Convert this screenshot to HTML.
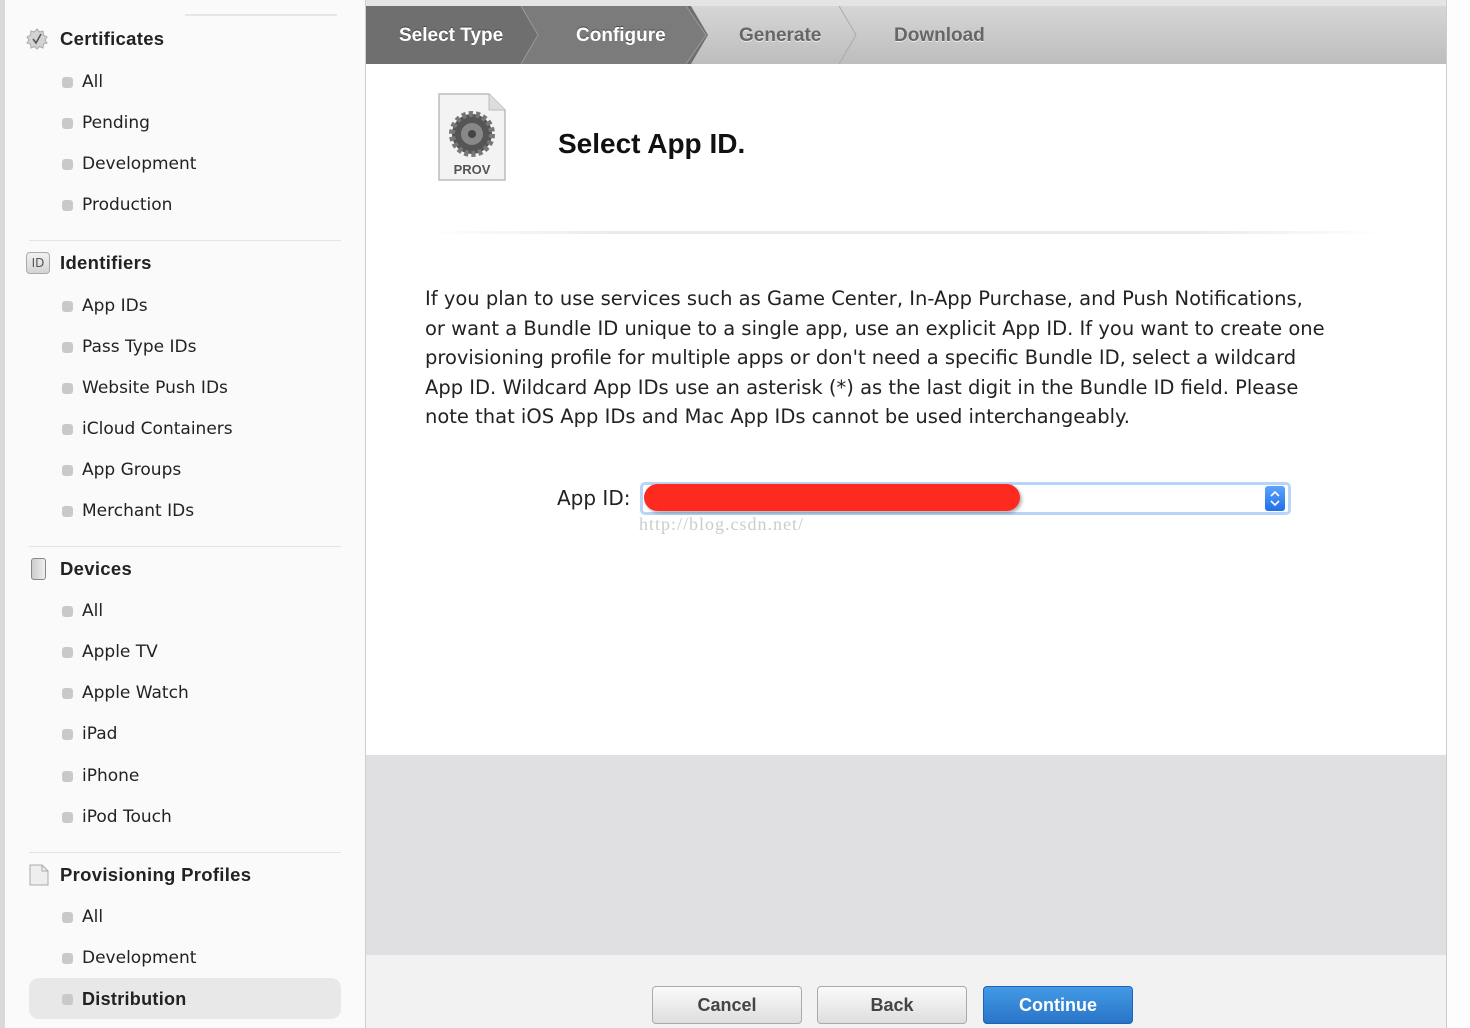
<!DOCTYPE html>
<html><head><meta charset="utf-8"><style>
*{margin:0;padding:0;box-sizing:border-box}
body{width:1470px;height:1028px;overflow:hidden;background:#fff;font-family:"DejaVu Sans","Liberation Sans",sans-serif;position:relative}
.side{position:absolute;left:0;top:0;width:366px;height:1028px;background:#fafafa;border-right:1px solid #cfcfcf}
.abs{position:absolute}
.h{position:absolute;left:60px;font-size:18.5px;font-weight:bold;color:#222;font-family:"Liberation Sans",sans-serif;letter-spacing:0.3px}
.i{position:absolute;left:82px;font-size:17px;color:#222;margin-top:2px}
.i:before{content:"";position:absolute;left:-20px;top:5px;width:11px;height:11px;border-radius:3px;background:#c9c9cc}
.sep{position:absolute;left:29px;width:312px;height:1px;background:#e3e3e3}
.main{position:absolute;left:366px;top:0;width:1080px;height:1028px;background:#fff}
.steps{position:absolute;left:0;top:6px;width:1080px;height:58px;background:linear-gradient(#d6d6d6,#bdbdbd)}
.st{position:absolute;top:1px;height:58px;line-height:58px;font-size:19px;font-weight:bold;font-family:"Liberation Sans",sans-serif}
p.t{position:absolute;left:59px;top:284px;width:900px;font-size:19.5px;line-height:29.5px;color:#222;font-family:"DejaVu Sans",sans-serif}
.btn{position:absolute;top:986px;width:150px;height:38px;border:1px solid #aaa;border-radius:4px;background:linear-gradient(#fafafa,#dedede);text-align:center;line-height:36px;font-size:18px;font-weight:bold;color:#444;font-family:"Liberation Sans",sans-serif}
</style></head><body>
<div class="side">
<div class="abs" style="left:0;top:0;width:5px;height:1028px;background:#d9d9d9"></div>
<div class="abs" style="left:185px;top:14px;width:152px;height:2px;background:#e6e6e6"></div>
<svg class="abs" style="left:26px;top:28px" width="22" height="22" viewBox="0 0 22 22"><polygon points="11,1 13.5,4 17,3 17.5,7 21,9 19,12 21,15 17.5,16 17,20 13.5,18.5 11,21 8.5,18.5 5,20 4.5,16 1,15 3,12 1,9 4.5,7 5,3 8.5,4" fill="#d3d3d3" stroke="#aaa"/><path d="M7 11 l3 4 l5 -9" stroke="#555" stroke-width="1.6" fill="none"/></svg>
<div class="h" style="top:28px">Certificates</div>
<div class="i" style="top:70px">All</div>
<div class="i" style="top:111px">Pending</div>
<div class="i" style="top:152px">Development</div>
<div class="i" style="top:193px">Production</div>
<div class="sep" style="top:240px"></div>
<div class="abs" style="left:26px;top:252px;width:24px;height:22px;border:1px solid #aaa;border-radius:4px;background:linear-gradient(#f2f2f2,#d4d4d4);font-size:12px;color:#555;text-align:center;line-height:20px">ID</div>
<div class="h" style="top:252px">Identifiers</div>
<div class="i" style="top:294px">App IDs</div>
<div class="i" style="top:335px">Pass Type IDs</div>
<div class="i" style="top:376px">Website Push IDs</div>
<div class="i" style="top:417px">iCloud Containers</div>
<div class="i" style="top:458px">App Groups</div>
<div class="i" style="top:499px">Merchant IDs</div>
<div class="sep" style="top:546px"></div>
<div class="abs" style="left:31px;top:558px;width:15px;height:22px;border:1px solid #888;border-radius:3px;background:linear-gradient(90deg,#ccc,#eee)"></div>
<div class="h" style="top:558px">Devices</div>
<div class="i" style="top:599px">All</div>
<div class="i" style="top:640px">Apple TV</div>
<div class="i" style="top:681px">Apple Watch</div>
<div class="i" style="top:722px">iPad</div>
<div class="i" style="top:764px">iPhone</div>
<div class="i" style="top:805px">iPod Touch</div>
<div class="sep" style="top:852px"></div>
<svg class="abs" style="left:29px;top:864px" width="20" height="22"><path d="M1 1 H13 L19 7 V21 H1 Z" fill="#eee" stroke="#aaa"/><path d="M13 1 V7 H19" fill="none" stroke="#aaa"/></svg>
<div class="h" style="top:864px">Provisioning Profiles</div>
<div class="i" style="top:905px">All</div>
<div class="i" style="top:946px">Development</div>
<div class="abs" style="left:29px;top:978px;width:312px;height:41px;border-radius:10px;background:#e8e8e8"></div>
<div class="i" style="top:987px;font-weight:bold;font-family:'Liberation Sans',sans-serif;font-size:18px;letter-spacing:0.3px">Distribution</div>
</div>
<div class="main">
<div class="abs" style="left:0;top:0;width:1080px;height:6px;background:#e4e4e4"></div>
<div class="steps">
<svg class="abs" style="left:0;top:0" width="600" height="58"><polygon points="0,0 325,0 342,29 325,58 0,58" fill="#6f6f6f"/><polygon points="155,0 320,0 340,29 320,58 155,58 172,29" fill="#7b7b7b"/><path d="M155 0 L172 29 L155 58 M320 0 L340 29 L320 58" stroke="#999" fill="none"/><path d="M473 0 L490 29 L473 58" stroke="#aaa" fill="none"/></svg>
<div class="st" style="left:33px;color:#fff;text-shadow:0 -1px 0 #444">Select Type</div>
<div class="st" style="left:210px;color:#fff;text-shadow:0 -1px 0 #444">Configure</div>
<div class="st" style="left:373px;color:#666;text-shadow:0 1px 0 #eee">Generate</div>
<div class="st" style="left:528px;color:#666;text-shadow:0 1px 0 #eee">Download</div>
</div>
<svg class="abs" style="left:71px;top:92px" width="70" height="92"><path d="M2 2 H52 L68 18 V88 H2 Z" fill="#f3f3f3" stroke="#bbb" stroke-width="1.5"/><path d="M52 2 V18 H68" fill="#ddd" stroke="#bbb"/><circle cx="35" cy="42" r="20" fill="#555" stroke="#777" stroke-width="6" stroke-dasharray="4 3"/><circle cx="35" cy="42" r="11" fill="#888"/><circle cx="35" cy="42" r="4" fill="#444"/><text x="35" y="82" font-size="13" font-weight="bold" fill="#555" text-anchor="middle" font-family="Liberation Sans,sans-serif">PROV</text></svg>
<div class="abs" style="left:192px;top:128px;font-size:28px;font-weight:bold;color:#111;font-family:'Liberation Sans',sans-serif">Select App ID.</div>
<div class="abs" style="left:59px;top:231px;width:960px;height:3px;background:linear-gradient(90deg,#fff,#eaeaea 20%,#eaeaea 80%,#fff)"></div>
<p class="t">If you plan to use services such as Game Center, In-App Purchase, and Push Notifications, or want a Bundle ID unique to a single app, use an explicit App ID. If you want to create one provisioning profile for multiple apps or don't need a specific Bundle ID, select a wildcard App ID. Wildcard App IDs use an asterisk (*) as the last digit in the Bundle ID field. Please note that iOS App IDs and Mac App IDs cannot be used interchangeably.</p>
<div class="abs" style="left:191px;top:486px;font-size:20px;color:#222">App ID:</div>
<div class="abs" style="left:274px;top:482px;width:651px;height:33px;border:3px solid #b8d5f7;border-radius:5px;background:#fff"></div>
<div class="abs" style="left:899px;top:486px;width:20px;height:25px;background:linear-gradient(#5da3ff,#1f6fe8);border-radius:3px"><svg width="20" height="25"><path d="M6 10 L10 6 L14 10 M6 15 L10 19 L14 15" stroke="#fff" stroke-width="1.6" fill="none"/></svg></div>
<div class="abs" style="left:278px;top:484px;width:376px;height:27px;border-radius:14px;background:#fe2a1f;box-shadow:2px 2px 3px rgba(0,0,0,.3)"></div>
<div class="abs" style="left:273px;top:514px;font-size:18px;color:#ccc;font-family:'Liberation Serif',serif;letter-spacing:1px">http://blog.csdn.net/</div>
<div class="abs" style="left:0;top:755px;width:1080px;height:200px;background:#e0e0e2"></div>
<div class="abs" style="left:0;top:955px;width:1080px;height:73px;background:#f2f2f2"></div>
<div class="btn" style="left:286px">Cancel</div>
<div class="btn" style="left:451px">Back</div>
<div class="btn" style="left:617px;border-color:#1c64b8;background:linear-gradient(#429ae6,#2a74c7);color:#fff">Continue</div>
</div>
<div class="abs" style="left:1446px;top:0;width:1px;height:1028px;background:#ccc"></div>
<div class="abs" style="left:1447px;top:0;width:23px;height:1028px;background:#fdfdfd"></div>
</body></html>
